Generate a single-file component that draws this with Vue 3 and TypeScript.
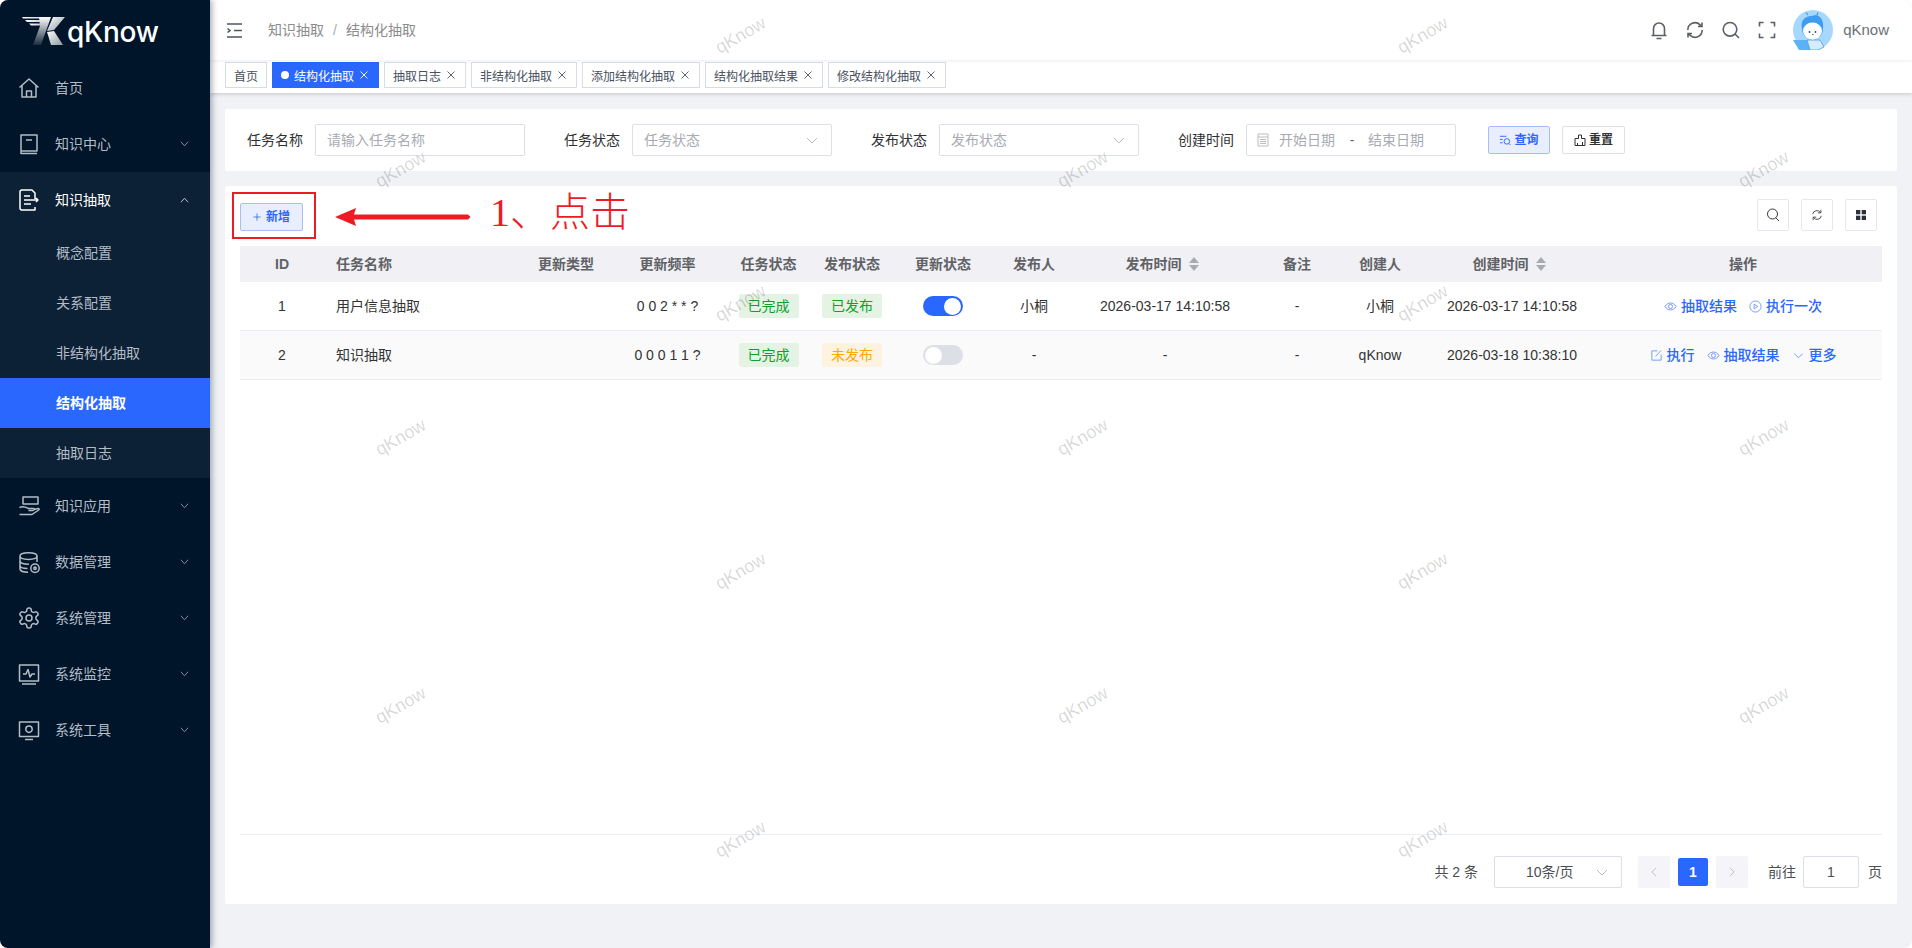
<template>
  <div class="app">
    <aside class="sidebar">
      <div class="logo">
        <svg class="logo-mark" viewBox="0 0 43 28" width="43" height="28">
          <defs>
            <linearGradient id="lgA" x1="0" y1="0" x2="0" y2="1">
              <stop offset="0" stop-color="#ffffff" />
              <stop offset="1" stop-color="#1c2c40" />
            </linearGradient>
            <linearGradient id="lgB" x1="0" y1="0" x2="1" y2="1">
              <stop offset="0" stop-color="#ffffff" />
              <stop offset="1" stop-color="#8f98a3" />
            </linearGradient>
            <linearGradient id="lgC" x1="0" y1="0" x2="1" y2="0">
              <stop offset="0" stop-color="#ffffff" />
              <stop offset="1" stop-color="#c9ced4" />
            </linearGradient>
          </defs>
          <polygon points="0,0 20,0 20,1.6 1,1.6" fill="url(#lgC)" />
          <polygon points="3,3 19,3 19,5 5,5" fill="url(#lgC)" />
          <polygon points="7,6.5 18,6.5 18,8.5 9,8.5" fill="url(#lgC)" />
          <polygon points="17,0 29,0 19,28 11,28 18,9" fill="url(#lgA)" />
          <polygon points="31,0 43,0 32,13 25,14" fill="url(#lgB)" />
          <polygon points="25,15 32,14 41,28 29,28" fill="url(#lgB)" />
        </svg>
        <span class="logo-text">qKnow</span>
      </div>
      <nav class="menu">
        <template v-for="item in menu" :key="item.label">
          <div class="menu-item" :class="{ open: item.children }">
            <svg class="menu-icon" viewBox="0 0 24 24" width="24" height="24">
              <path :d="item.icon" />
            </svg>
            <span class="menu-label">{{ item.label }}</span>
            <svg v-if="item.arrow" class="menu-arrow" viewBox="0 0 10 6" width="9" height="6">
              <path :d="item.children ? 'M1 5.5 5 1l4 4.5' : 'M1 .5 5 5l4-4.5'" />
            </svg>
          </div>
          <div v-if="item.children" class="submenu">
            <div
              v-for="sub in item.children"
              :key="sub"
              class="submenu-item"
              :class="{ active: sub === '结构化抽取' }"
            >
              {{ sub }}
            </div>
          </div>
        </template>
      </nav>
    </aside>

    <div class="main">
      <header class="navbar">
        <svg class="collapse" viewBox="0 0 17 15" width="17" height="15">
          <path d="M1 1h15M8 7.5h8M1 14h15M1.5 5.5l2.5 2-2.5 2" />
        </svg>
        <div class="breadcrumb">
          <span>知识抽取</span>
          <span class="sep">/</span>
          <span>结构化抽取</span>
        </div>
        <div class="nav-right">
          <svg class="nav-icon" viewBox="0 0 20 20" width="20" height="20">
            <path d="M2.500 15.500h15M4.500 15.500V8.500a5.500 5.500 0 0 1 11 0v7M7.500 18.500h5" />
          </svg>
          <svg class="nav-icon" viewBox="0 0 20 20" width="20" height="20">
            <path d="M2.800 10a7.200 7.200 0 0 1 12.300-5.100L17 6.500M17.200 10a7.200 7.200 0 0 1-12.300 5.100L3 13.500M17 2.500v4h-4M3 17.500v-4h4" />
          </svg>
          <svg class="nav-icon" viewBox="0 0 20 20" width="20" height="20">
            <path d="M9 2.500a6.800 6.800 0 1 0 0 13.600a6.800 6.800 0 0 0 0-13.600zM14 14l4 4" />
          </svg>
          <svg class="nav-icon" viewBox="0 0 20 20" width="20" height="20">
            <path d="M2.500 6.500v-4h4M13.500 2.500h4v4M17.500 13.500v4h-4M6.500 17.500h-4v-4" />
          </svg>
          <svg class="avatar" viewBox="0 0 40 40" width="40" height="40">
            <circle cx="20" cy="20" r="20" fill="#a6d8fd" />
            <path d="M0 30h14l4 10H6z" fill="#5cb2f5" />
            <path d="M14 30h13l4 7-6 3h-8z" fill="#d5ecfd" stroke="#4a9be0" stroke-width=".8" />
            <path d="M9 19c-2-8 3-13 9-13 2 0 3-1 5-1 5 1 8 6 7 14 0 4-2 7-4 8H13c-2-1-4-4-4-8z" fill="#3f9df1" />
            <ellipse cx="19.500" cy="21" rx="9.500" ry="8.500" fill="#ffffff" />
            <circle cx="16.500" cy="22" r=".9" fill="#1e4f86" />
            <circle cx="22.500" cy="22" r=".9" fill="#1e4f86" />
            <path d="M19 24.500h1.500" stroke="#1e4f86" stroke-width=".8" />
            <path d="M15 5l-2-2.500M24 5l1-2.500" stroke="#2b7fd2" stroke-width="1" fill="none" />
          </svg>
          <span class="user-name">qKnow</span>
        </div>
      </header>

      <div class="tags-bar">
        <div v-for="tag in tags" :key="tag" class="tag-view" :class="{ active: tag === '结构化抽取' }">
          <i v-if="tag === '结构化抽取'" class="tag-dot"></i>
          <span>{{ tag }}</span>
          <svg v-if="tag !== '首页'" class="tag-close" viewBox="0 0 8 8" width="8" height="8">
            <path d="M.5.5l7 7M7.500.5l-7 7" />
          </svg>
        </div>
      </div>

      <div class="content">
        <section class="query-card">
          <div class="form-item">
            <label>任务名称</label>
            <input class="field field-name" placeholder="请输入任务名称" />
          </div>
          <div class="form-item">
            <label>任务状态</label>
            <div class="field field-select">
              <span>任务状态</span>
              <svg class="chevron" viewBox="0 0 12 7" width="12" height="7"><path d="M1 1l5 5 5-5" /></svg>
            </div>
          </div>
          <div class="form-item">
            <label>发布状态</label>
            <div class="field field-select">
              <span>发布状态</span>
              <svg class="chevron" viewBox="0 0 12 7" width="12" height="7"><path d="M1 1l5 5 5-5" /></svg>
            </div>
          </div>
          <div class="form-item form-date">
            <label>创建时间</label>
            <div class="field field-date">
              <svg class="date-icon" viewBox="0 0 12 14" width="12" height="14">
                <path d="M1 1h10v12H1zM1 4h10M3 6.500h6M3 8.500h6M3 10.500h6" />
              </svg>
              <span class="date-text">开始日期</span>
              <span class="date-sep">-</span>
              <span class="date-text">结束日期</span>
            </div>
          </div>
          <button class="btn btn-primary">
            <svg viewBox="0 0 13 12" width="12" height="12">
              <path d="M1 2h7M1 5.500h3M1 9h3M8.500 4.500a3 3 0 1 0 0 6 3 3 0 0 0 0-6zM10.700 9.800l1.600 1.600" />
            </svg>
            查询
          </button>
          <button class="btn btn-default">
            <svg viewBox="0 0 12 12" width="12" height="12">
              <path d="M4.500 1h3v3.500H11v7H1v-7h3.500zM3.500 11.500V9M8.500 11.500V8" />
            </svg>
            重置
          </button>
        </section>

        <section class="table-card">
          <div class="toolbar">
            <button class="btn btn-primary btn-add">
              <svg viewBox="0 0 10 10" width="8" height="8"><path d="M5 .5v9M.5 5h9" /></svg>
              新增
            </button>
            <div class="tools">
              <button class="tool-btn">
                <svg viewBox="0 0 14 14" width="14" height="14">
                  <path d="M6.500 1a5 5 0 1 0 0 10 5 5 0 0 0 0-10zM10 10l3 3" />
                </svg>
              </button>
              <button class="tool-btn">
                <svg viewBox="0 0 14 14" width="12" height="12">
                  <path d="M2 6a5 5 0 0 1 9-2M12 8a5 5 0 0 1-9 2M11.500 1v3.500H8M2.500 13V9.500H6" />
                </svg>
              </button>
              <button class="tool-btn">
                <svg viewBox="0 0 12 12" width="12" height="12">
                  <rect class="solid" x="1" y="1" width="4.300" height="4.300" />
                  <rect class="solid" x="6.700" y="1" width="4.300" height="4.300" />
                  <rect class="solid" x="1" y="6.700" width="4.300" height="4.300" />
                  <rect class="solid" x="6.700" y="6.700" width="4.300" height="4.300" />
                </svg>
              </button>
            </div>
          </div>

          <div class="table">
            <div class="row head">
              <div v-for="col in columns" :key="col.label" class="cell" :class="{ left: col.left }">
                {{ col.label }}
                <span v-if="col.sort" class="sort"><i></i><i></i></span>
              </div>
            </div>
            <div v-for="(row, i) in rows" :key="row.id" class="row" :class="{ striped: i % 2 === 1 }">
              <div class="cell">{{ row.id }}</div>
              <div class="cell left">{{ row.name }}</div>
              <div class="cell"></div>
              <div class="cell">{{ row.cron }}</div>
              <div class="cell"><span class="status green">已完成</span></div>
              <div class="cell">
                <span class="status" :class="row.published ? 'green' : 'orange'">
                  {{ row.published ? '已发布' : '未发布' }}
                </span>
              </div>
              <div class="cell">
                <span class="switch" :class="{ on: row.enabled }"><i></i></span>
              </div>
              <div class="cell">{{ row.publisher }}</div>
              <div class="cell">{{ row.publishTime }}</div>
              <div class="cell">-</div>
              <div class="cell">{{ row.creator }}</div>
              <div class="cell">{{ row.createTime }}</div>
              <div class="cell actions">
                <a v-for="act in row.actions" :key="act" class="action">
                  <svg viewBox="0 0 14 14" width="13" height="13">
                    <path :d="actionIcons[act]" />
                  </svg>
                  {{ act }}
                </a>
              </div>
            </div>
          </div>

          <footer class="pagination">
            <span class="total">共 2 条</span>
            <div class="page-size">
              <span>10条/页</span>
              <svg class="chevron" viewBox="0 0 12 7" width="12" height="7"><path d="M1 1l5 5 5-5" /></svg>
            </div>
            <button class="page-nav">
              <svg viewBox="0 0 7 12" width="6" height="10"><path d="M6 1 1 6l5 5" /></svg>
            </button>
            <span class="page-current">1</span>
            <button class="page-nav">
              <svg viewBox="0 0 7 12" width="6" height="10"><path d="M1 1l5 5-5 5" /></svg>
            </button>
            <span class="goto">前往</span>
            <input class="goto-input" value="1" />
            <span class="goto-unit">页</span>
          </footer>

          <!-- hand-drawn annotation on top of the screenshot -->
          <div class="mark-box"></div>
          <svg class="mark-arrow" viewBox="0 0 136 18" width="136" height="18">
            <polygon points="0,9 21,0 19,6.500 133,6.500 135.500,9 133,11.500 19,11.500 21,18" />
          </svg>
          <div class="mark-text">1、点击</div>
        </section>
      </div>

      <span
        v-for="(w, i) in watermarks"
        :key="i"
        class="watermark"
        :style="{ left: w.x + 'px', top: w.y + 'px' }"
      >qKnow</span>
    </div>
  </div>
</template>

<script setup lang="ts">
const chart = {
  home: 'M2.500 11.500 12 3l9.500 8.500M5 9.500V21h14V9.500M9.500 21v-6h5v6',
  book: 'M4 19V3h16v16H4zm0 0v2.500h16M9 8h6',
  extract: 'M18 11V5l-3-3H5a2 2 0 0 0-2 2v16a2 2 0 0 0 2 2h13v-3M7 8h6M7 12h14M19 10l2 2-2 2M7 16h7',
  app: 'M6 3h15v7H6zM2.500 13.500c4-2 7 0 9 1h5c2 0 1 2-1 2h-4M17 15.500l4-1c1.500 0 1.500 1 0 2l-6 4H2.500',
  data: 'M3 6c0-4.500 17-4.500 17 0s-17 4.500-17 0zM3 6v13c0 2 4 3.200 8 3.200M20 6v6M3 11c0 2 4 3.200 9 3.200M3 15.500c0 2 4 3 7.500 3M18 14a4.200 4.200 0 1 0 0 8.400 4.200 4.200 0 0 0 0-8.400zM18 17a1.200 1.200 0 1 0 0 2.400 1.200 1.200 0 0 0 0-2.400z',
  gear: 'M12.220 2h-.44a2 2 0 0 0-2 2v.18a2 2 0 0 1-1 1.730l-.43.250a2 2 0 0 1-2 0l-.15-.08a2 2 0 0 0-2.730.730l-.22.380a2 2 0 0 0 .730 2.730l.15.100a2 2 0 0 1 1 1.720v.510a2 2 0 0 1-1 1.740l-.15.090a2 2 0 0 0-.730 2.730l.22.380a2 2 0 0 0 2.730.730l.15-.08a2 2 0 0 1 2 0l.43.250a2 2 0 0 1 1 1.730V20a2 2 0 0 0 2 2h.44a2 2 0 0 0 2-2v-.18a2 2 0 0 1 1-1.730l.43-.25a2 2 0 0 1 2 0l.15.08a2 2 0 0 0 2.730-.73l.22-.39a2 2 0 0 0-.73-2.730l-.15-.08a2 2 0 0 1-1-1.740v-.5a2 2 0 0 1 1-1.740l.15-.09a2 2 0 0 0 .73-2.730l-.22-.38a2 2 0 0 0-2.730-.73l-.15.08a2 2 0 0 1-2 0l-.43-.25a2 2 0 0 1-1-1.730V4a2 2 0 0 0-2-2zM12 9a3 3 0 1 0 0 6 3 3 0 0 0 0-6z',
  monitor: 'M2.500 3h19v16h-19zM5 22h14M6 12h3l2-4.500 2 7.500 2-3h3',
  tools: 'M2.500 4h19v14.500h-19zM8 21.500h8M12 8a3.200 3.200 0 1 0 0 6.400 3.200 3.200 0 0 0 0-6.400z'
}

const menu = [
  { label: '首页', icon: chart.home, arrow: false },
  { label: '知识中心', icon: chart.book, arrow: true },
  {
    label: '知识抽取',
    icon: chart.extract,
    arrow: true,
    children: ['概念配置', '关系配置', '非结构化抽取', '结构化抽取', '抽取日志']
  },
  { label: '知识应用', icon: chart.app, arrow: true },
  { label: '数据管理', icon: chart.data, arrow: true },
  { label: '系统管理', icon: chart.gear, arrow: true },
  { label: '系统监控', icon: chart.monitor, arrow: true },
  { label: '系统工具', icon: chart.tools, arrow: true }
]

const tags = ['首页', '结构化抽取', '抽取日志', '非结构化抽取', '添加结构化抽取', '结构化抽取结果', '修改结构化抽取']

const columns = [
  { label: 'ID' },
  { label: '任务名称', left: true },
  { label: '更新类型' },
  { label: '更新频率' },
  { label: '任务状态' },
  { label: '发布状态' },
  { label: '更新状态' },
  { label: '发布人' },
  { label: '发布时间', sort: true },
  { label: '备注' },
  { label: '创建人' },
  { label: '创建时间', sort: true },
  { label: '操作' }
]

const actionIcons: Record<string, string> = {
  抽取结果: 'M1 7c3-5 9-5 12 0-3 5-9 5-12 0zM7 4.800a2.200 2.200 0 1 0 0 4.400 2.200 2.200 0 0 0 0-4.400z',
  执行一次: 'M7 1a6 6 0 1 0 0 12A6 6 0 0 0 7 1zM5.500 4.500v5l4-2.500z',
  执行: 'M8 2H2v10h10V6M6 8l6-6.500',
  更多: 'M2.500 5 7 9.500 11.500 5'
}

const rows = [
  {
    id: 1,
    name: '用户信息抽取',
    cron: '0 0 2 * * ?',
    published: true,
    enabled: true,
    publisher: '小桐',
    publishTime: '2026-03-17 14:10:58',
    creator: '小桐',
    createTime: '2026-03-17 14:10:58',
    actions: ['抽取结果', '执行一次']
  },
  {
    id: 2,
    name: '知识抽取',
    cron: '0 0 0 1 1 ?',
    published: false,
    enabled: false,
    publisher: '-',
    publishTime: '-',
    creator: 'qKnow',
    createTime: '2026-03-18 10:38:10',
    actions: ['执行', '抽取结果', '更多']
  }
]

// watermark tiles: staggered grid, offsets are relative to .main
const watermarks: { x: number; y: number }[] = []
for (let r = 0; r < 7; r++) {
  const xs = r % 2 === 0 ? [741, 1423] : [401, 1083, 1764]
  for (const x of xs) {
    watermarks.push({ x: x - 210 - 28, y: 32 + r * 134 - 7 })
  }
}
</script>

<style>
html,
body {
  margin: 0;
  background: #ffffff;
}
</style>

<style scoped>
.app {
  display: flex;
  height: 948px;
  overflow: hidden;
  border-radius: 8px;
  font-family: "Liberation Sans", "Noto Sans CJK SC", sans-serif;
  font-size: 14px;
  line-height: 20px;
  color: #303133;
  background: #f0f2f6;
}

/* sidebar */
.sidebar {
  position: relative;
  z-index: 5;
  flex: 0 0 210px;
  background: #00152a;
  box-shadow: 2px 0 6px rgba(0, 21, 41, 0.35);
}

.logo {
  display: flex;
  align-items: flex-start;
  height: 60px;
  padding: 17px 0 0 22px;
  box-sizing: border-box;
}

.logo-text {
  margin-left: 2px;
  font-family: Inter, "Liberation Sans", sans-serif;
  font-size: 28px;
  line-height: 30px;
  font-weight: 500;
  color: #ffffff;
  letter-spacing: -0.3px;
}

.menu-item {
  display: flex;
  align-items: center;
  height: 56px;
  padding-left: 17px;
  color: #b4bcc6;
}

.menu-item.open {
  color: #ffffff;
  background: #0c2135;
}

.menu-icon {
  flex: none;
  fill: none;
  stroke: currentColor;
  stroke-width: 1.5;
  stroke-linejoin: round;
}

.menu-label {
  margin-left: 14px;
}

.menu-arrow {
  margin-left: auto;
  margin-right: 21px;
  fill: none;
  stroke: currentColor;
  stroke-width: 1;
  opacity: 0.8;
}

.submenu {
  background: #0c2135;
}

.submenu-item {
  height: 50px;
  line-height: 50px;
  padding-left: 56px;
  color: #b4bcc6;
}

.submenu-item.active {
  background: #2a67fe;
  color: #ffffff;
  font-weight: 700;
}

/* top */
.main {
  position: relative;
  flex: 1;
  min-width: 0;
  display: flex;
  flex-direction: column;
}

.navbar {
  display: flex;
  align-items: center;
  height: 60px;
  flex: none;
  padding: 0 23px 0 16px;
  background: #ffffff;
  box-shadow: 0 1px 3px rgba(0, 21, 41, 0.08);
  position: relative;
  z-index: 2;
}

.collapse {
  fill: none;
  stroke: #50565e;
  stroke-width: 1.6;
}

.breadcrumb {
  margin-left: 25px;
  color: #8c8c8c;
}

.breadcrumb .sep {
  margin: 0 9px;
  color: #a8abb2;
}

.nav-right {
  margin-left: auto;
  display: flex;
  align-items: center;
}

.nav-icon {
  margin-right: 16px;
  fill: none;
  stroke: #5a5f68;
  stroke-width: 1.6;
}

.user-name {
  margin-left: 10px;
  font-size: 15px;
  color: #6b7078;
}

.tags-bar {
  display: flex;
  align-items: center;
  gap: 5px;
  flex: none;
  height: 33px;
  padding: 0 0 3px 15px;
  box-sizing: border-box;
  background: #ffffff;
  box-shadow: 0 1px 4px rgba(0, 0, 0, 0.18);
  position: relative;
  z-index: 1;
}

.tag-view {
  display: flex;
  align-items: center;
  height: 26px;
  padding: 0 8px;
  box-sizing: border-box;
  border: 1px solid #d8dce5;
  font-size: 12px;
  line-height: normal;
  color: #495060;
}

.tag-view.active {
  background: #2a67fe;
  border-color: #2a67fe;
  color: #ffffff;
}

.tag-dot {
  width: 8px;
  height: 8px;
  margin-right: 5px;
  border-radius: 50%;
  background: #ffffff;
}

.tag-close {
  margin-left: 6px;
  margin-right: 2px;
  fill: none;
  stroke: currentColor;
  stroke-width: 0.9;
}

/* content */
.content {
  flex: 1;
  min-height: 0;
  display: flex;
  flex-direction: column;
  gap: 15px;
  padding: 16px 15px 44px;
}

.query-card {
  display: flex;
  align-items: center;
  height: 62px;
  flex: none;
  padding-left: 22px;
  box-sizing: border-box;
  background: #ffffff;
  border-radius: 2px;
}

.form-item {
  display: flex;
  align-items: center;
  gap: 12px;
  margin-right: 39px;
}

.form-date {
  margin-right: 32px;
}

.form-item label {
  color: #303133;
}

.field {
  height: 32px;
  box-sizing: border-box;
  border: 1px solid #dcdfe6;
  border-radius: 2px;
  background: #ffffff;
  color: #a8abb2;
  font: inherit;
}

.field-name {
  width: 210px;
  padding: 0 11px;
  outline: none;
}

.field-name::placeholder {
  color: #a8abb2;
}

.field-select {
  width: 200px;
  display: flex;
  align-items: center;
  justify-content: space-between;
  padding: 0 13px 0 11px;
}

.chevron {
  fill: none;
  stroke: #b8bbc2;
  stroke-width: 1;
}

.field-date {
  width: 210px;
  display: flex;
  align-items: center;
  padding-left: 10px;
}

.date-icon {
  fill: none;
  stroke: #b8bbc2;
  stroke-width: 1;
}

.date-text {
  width: 57px;
}

.date-icon + .date-text {
  margin-left: 10px;
}

.date-sep {
  width: 32px;
  text-align: center;
  color: #606266;
}

.btn {
  display: inline-flex;
  align-items: center;
  justify-content: center;
  gap: 3px;
  height: 28px;
  padding: 0;
  border-radius: 2px;
  font-family: inherit;
  font-size: 12px;
  line-height: 16px;
  font-weight: 700;
  cursor: pointer;
}

.btn svg {
  fill: none;
  stroke: currentColor;
  stroke-width: 1;
}

.btn-primary {
  width: 62px;
  background: #e8eefe;
  border: 1px solid #a5bffd;
  color: #2a67fe;
}

.btn-default {
  width: 63px;
  margin-left: 12px;
  background: #ffffff;
  border: 1px solid #dcdfe6;
  color: #303133;
}

.table-card {
  position: relative;
  flex: 1;
  min-height: 0;
  display: flex;
  flex-direction: column;
  padding: 13px 15px 16px;
  box-sizing: border-box;
  background: #ffffff;
  border-radius: 2px;
}

.toolbar {
  display: flex;
  align-items: flex-start;
  justify-content: space-between;
  margin-bottom: 15px;
}

.btn-add {
  width: 63px;
  gap: 5px;
  margin-top: 4px;
}

.tools {
  display: flex;
  gap: 12px;
  margin-right: 5px;
}

.tool-btn {
  display: flex;
  align-items: center;
  justify-content: center;
  width: 32px;
  height: 32px;
  padding: 0;
  border: 1px solid #e4e7ed;
  border-radius: 2px;
  background: #ffffff;
}

.tool-btn svg {
  fill: none;
  stroke: #33373e;
  stroke-width: 1;
}

.tool-btn svg .solid {
  fill: #2c3038;
  stroke: none;
}

.table {
  flex: 1;
  min-height: 0;
}

.row {
  display: grid;
  grid-template-columns: 84px 200px 84px 119px 83px 84px 98px 84px 178px 86px 80px 184px 278px;
  height: 49px;
  box-sizing: border-box;
  border-bottom: 1px solid #ebeef5;
  color: #333333;
}

.row.head {
  height: 36px;
  background: #f0f0f5;
  border-bottom: none;
  color: #606266;
  font-weight: 700;
}

.row.striped {
  background: #fafafa;
}

.cell {
  display: flex;
  align-items: center;
  justify-content: center;
  min-width: 0;
  white-space: nowrap;
}

.cell.left {
  justify-content: flex-start;
  padding-left: 12px;
}

.sort {
  display: inline-flex;
  flex-direction: column;
  gap: 2px;
  margin-left: 7px;
  margin-right: 6px;
}

.sort i {
  width: 0;
  height: 0;
  border-left: 5px solid transparent;
  border-right: 5px solid transparent;
  border-bottom: 6px solid #a8abb2;
}

.sort i + i {
  border-bottom: none;
  border-top: 6px solid #a8abb2;
}

.status {
  display: inline-flex;
  align-items: center;
  justify-content: center;
  width: 60px;
  height: 24px;
  border-radius: 2px;
}

.status.green {
  background: #e4f3e4;
  color: #0ca02c;
}

.status.orange {
  background: #fdf3e0;
  color: #ffa800;
}

.switch {
  position: relative;
  display: block;
  width: 40px;
  height: 20px;
  border-radius: 10px;
  background: #dcdfe6;
}

.switch i {
  position: absolute;
  top: 1.5px;
  left: 2px;
  width: 17px;
  height: 17px;
  border-radius: 50%;
  background: #ffffff;
}

.switch.on {
  background: #2a67fe;
}

.switch.on i {
  left: 21px;
}

.actions {
  gap: 12px;
}

.action {
  display: inline-flex;
  align-items: center;
  gap: 4px;
  color: #2a67fe;
  font-weight: 500;
}

.action svg {
  fill: none;
  stroke: #6f97fc;
  stroke-width: 1;
}

.pagination {
  display: flex;
  align-items: center;
  height: 54px;
  padding-top: 21px;
  box-sizing: border-box;
  border-top: 1px solid #ebeef5;
  color: #4a4d52;
}

.total {
  margin-left: auto;
}

.page-size {
  position: relative;
  display: flex;
  align-items: center;
  justify-content: space-between;
  width: 128px;
  height: 32px;
  margin-left: 16px;
  padding: 0 13px 0 31px;
  box-sizing: border-box;
  border: 1px solid #dcdfe6;
  border-radius: 2px;
}

.page-nav {
  display: flex;
  align-items: center;
  justify-content: center;
  width: 32px;
  height: 32px;
  padding: 0;
  border: none;
  border-radius: 2px;
  background: #f4f4f9;
}

.page-size + .page-nav {
  margin-left: 16px;
}

.page-nav svg {
  fill: none;
  stroke: #b4b7bd;
  stroke-width: 1;
}

.page-current {
  display: flex;
  align-items: center;
  justify-content: center;
  width: 30px;
  height: 28px;
  margin: 0 8px;
  border-radius: 2px;
  background: #2a67fe;
  color: #ffffff;
  font-weight: 700;
}

.goto {
  margin-left: 20px;
}

.goto-input {
  width: 56px;
  height: 32px;
  margin-left: 7px;
  padding: 0;
  box-sizing: border-box;
  border: 1px solid #dcdfe6;
  border-radius: 2px;
  text-align: center;
  font: inherit;
  color: #4a4d52;
  outline: none;
}

.goto-unit {
  margin-left: 9px;
}

/* annotation */
.mark-box {
  position: absolute;
  left: 7px;
  top: 6px;
  width: 84px;
  height: 47px;
  box-sizing: border-box;
  border: 2px solid #ed1c24;
}

.mark-arrow {
  position: absolute;
  left: 110px;
  top: 22px;
  fill: #ed1c24;
}

.mark-text {
  position: absolute;
  left: 265px;
  top: 4px;
  font-family: "Liberation Serif", "Noto Sans CJK SC", serif;
  font-size: 40px;
  line-height: 46px;
  font-weight: 300;
  color: #ed1c24;
  white-space: nowrap;
}

.watermark {
  position: absolute;
  z-index: 3;
  transform: rotate(-30deg);
  font-size: 18px;
  line-height: 20px;
  color: rgba(0, 0, 0, 0.16);
  pointer-events: none;
  user-select: none;
}
</style>
